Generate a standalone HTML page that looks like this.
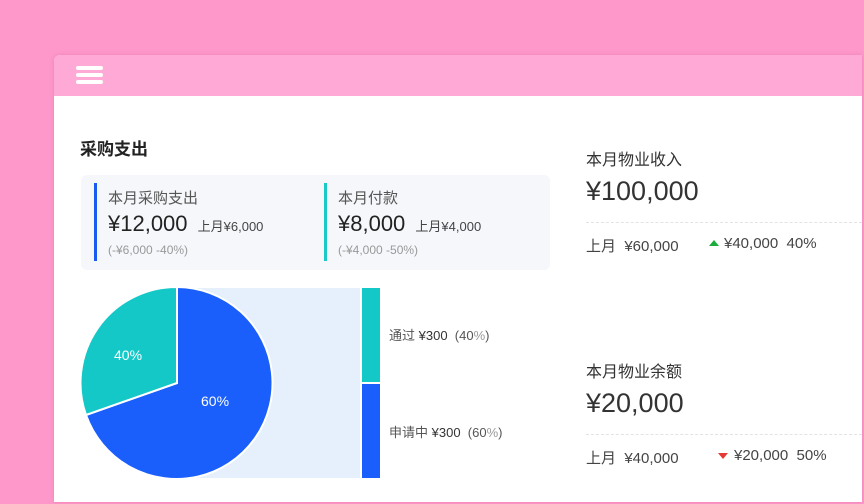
<!DOCTYPE html>
<html><head><meta charset="utf-8"><style>
*{margin:0;padding:0;box-sizing:border-box}
body{width:864px;height:504px;background:#fe98ca;position:relative;overflow:hidden;font-family:"Liberation Sans","Noto Sans CJK SC",sans-serif;color:#333}
.a{position:absolute;white-space:nowrap}
.card{position:absolute;left:54px;top:55px;width:808px;height:447px;background:#fff;border-radius:6px 0 0 0;overflow:hidden;box-shadow:0 0 4px rgba(200,80,140,.3)}
.hdr{position:absolute;left:0;top:0;width:808px;height:41px;background:#ffaad6}
.hb{position:absolute;left:22px;width:27px;height:4px;background:#fff;border-radius:2px}
.box{position:absolute;left:27px;top:120px;width:469px;height:95px;background:#f5f7fa;border-radius:6px}
.g{color:#555}
</style></head><body>
<div class="card">
 <div class="hdr"><div class="hb" style="top:11px"></div><div class="hb" style="top:18px"></div><div class="hb" style="top:25px"></div></div>
 <div class="a" style="left:26px;top:80px;font-size:17px;font-weight:bold;color:#222">采购支出</div>
 <div class="box"></div>
 <div class="a" style="left:40px;top:128px;width:3px;height:78px;background:#1b5cf0"></div>
 <div class="a" style="left:270px;top:128px;width:3px;height:78px;background:#1cc9c9"></div>
 <div class="a g" style="left:54px;top:132px;font-size:15px">本月采购支出</div>
 <div class="a" style="left:54px;top:156px;font-size:22px;color:#222">¥12,000 <span style="font-size:13px;color:#444;margin-left:4px">上月¥6,000</span></div>
 <div class="a" style="left:54px;top:188px;font-size:12px;color:#999">(-¥6,000 -40%)</div>
 <div class="a g" style="left:284px;top:132px;font-size:15px">本月付款</div>
 <div class="a" style="left:284px;top:156px;font-size:22px;color:#222">¥8,000 <span style="font-size:13px;color:#444;margin-left:4px">上月¥4,000</span></div>
 <div class="a" style="left:284px;top:188px;font-size:12px;color:#999">(-¥4,000 -50%)</div>
</div>
<svg class="a" style="left:0;top:0" width="864" height="504">
 <rect x="177" y="288" width="183" height="190" fill="#e6f0fc"/>
 <rect x="362" y="288" width="18" height="94" fill="#14c8c8"/>
 <rect x="362" y="384" width="18" height="94" fill="#1a5ffc"/>
 <path d="M177 383 L177 287 A96 96 0 1 1 86 415 Z" fill="#1a5ffc" stroke="#fff" stroke-width="2"/>
 <path d="M177 383 L86 415 A96 96 0 0 1 177 287 Z" fill="#14c8c8" stroke="#fff" stroke-width="2"/>
 <text x="114" y="360" font-size="14" fill="#fff" font-family="Liberation Sans">40%</text>
 <text x="201" y="406" font-size="14" fill="#fff" font-family="Liberation Sans">60%</text>
</svg>
<div class="a" style="left:389px;top:325px;font-size:13px;color:#555">通过 <span style="color:#333">¥300</span> &nbsp;(40<span style="color:#999">%</span>)</div>
<div class="a" style="left:389px;top:422px;font-size:13px;color:#555">申请中 <span style="color:#333">¥300</span> &nbsp;(60<span style="color:#999">%</span>)</div>

<div class="a" style="left:586px;top:146px;font-size:16px;color:#333">本月物业收入</div>
<div class="a" style="left:586px;top:176px;font-size:27px;color:#333">¥100,000</div>
<div class="a" style="left:586px;top:222px;width:276px;border-top:1px dashed #e3e3e3"></div>
<div class="a" style="left:586px;top:235px;font-size:15px;color:#444">上月 &nbsp;¥60,000</div>
<div class="a" style="left:709px;top:240px;width:0;height:0;border-left:5px solid transparent;border-right:5px solid transparent;border-bottom:6px solid #1aad3a"></div>
<div class="a" style="left:724px;top:235px;font-size:15px;color:#444">¥40,000 &nbsp;40%</div>

<div class="a" style="left:586px;top:358px;font-size:16px;color:#333">本月物业余额</div>
<div class="a" style="left:586px;top:388px;font-size:27px;color:#333">¥20,000</div>
<div class="a" style="left:586px;top:434px;width:276px;border-top:1px dashed #e3e3e3"></div>
<div class="a" style="left:586px;top:447px;font-size:15px;color:#444">上月 &nbsp;¥40,000</div>
<div class="a" style="left:718px;top:453px;width:0;height:0;border-left:5px solid transparent;border-right:5px solid transparent;border-top:6px solid #e53935"></div>
<div class="a" style="left:734px;top:447px;font-size:15px;color:#444">¥20,000 &nbsp;50%</div>
</body></html>
